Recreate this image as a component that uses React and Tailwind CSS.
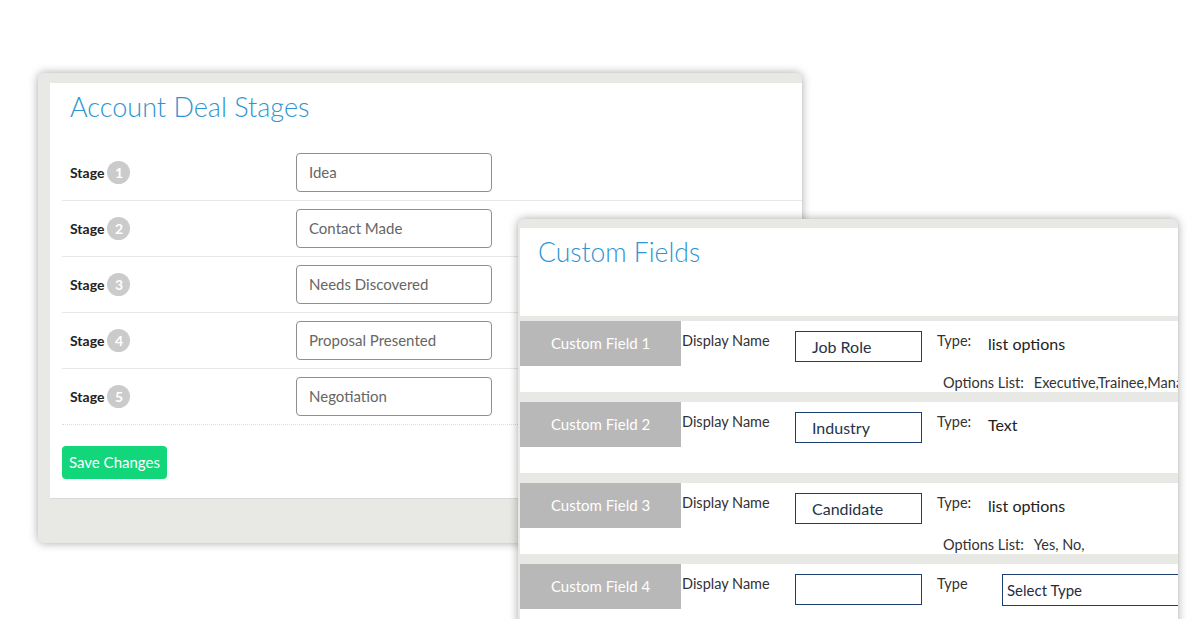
const STAGES = ['Idea', 'Contact Made', 'Needs Discovered', 'Proposal Presented', 'Negotiation']

const FIELDS = [
  { n: 1, name: 'Job Role', type: 'list options', options: 'Executive,Trainee,Manager,Director' },
  { n: 2, name: 'Industry', type: 'Text' },
  { n: 3, name: 'Candidate', type: 'list options', options: 'Yes, No,' },
  { n: 4, name: '', type: null },
]

function StageRow({ n, value, last }) {
  return (
    <div className={`flex items-center h-[56px] ${last ? 'border-b border-dotted border-[#dcdcdc]' : 'border-b border-[#e6e6e6]'}`}>
      <div className="w-[234px] pl-2 flex items-center gap-[3px]">
        <span className="text-[14px] font-bold text-[#222]">Stage</span>
        <span className="w-[23px] h-[23px] rounded-full bg-[#cbcbcb] text-white text-[14px] font-bold flex items-center justify-center">
          {n}
        </span>
      </div>
      <div className="w-[196px] h-[39px] border border-[#8f8f8f] rounded-[4px] flex items-center pl-3 text-[15px] text-[#666]">
        {value}
      </div>
    </div>
  )
}

function FieldRow({ f, first }) {
  return (
    <div>
      <div className={`bg-[#e8e8e4] ${first ? 'h-[5px]' : 'h-[10px]'}`} />
      <div className="relative h-[71px] flex items-start">
        <div className="w-[161px] h-[45px] bg-[#b8b8b8] text-white text-[15px] flex items-center justify-center shrink-0">
          Custom Field {f.n}
        </div>
        <div className="w-[114px] pl-px pt-[9px] text-[14.5px] text-[#333] shrink-0">Display Name</div>
        <div className="mt-[10px] w-[127px] h-[31px] border border-[#1b3f6e] pl-4 flex items-center text-[16px] text-[#24324a] shrink-0">
          {f.name}
        </div>
        <div className="pl-[15px] pt-[9px] text-[14.5px] text-[#333] w-[66px] shrink-0">{f.type ? 'Type:' : 'Type'}</div>
        {f.type ? (
          <div className="pt-[11px] text-[16px] text-[#222] whitespace-nowrap">{f.type}</div>
        ) : (
          <div className="mt-[10px] ml-[14px] w-[200px] h-[32px] border border-[#1b3f6e] pl-1 flex items-center text-[15px] text-[#1f2d44] shrink-0">
            Select Type
          </div>
        )}
        {f.options && (
          <div className="absolute left-[423px] top-[51px] text-[14.5px] text-[#333] whitespace-nowrap">
            Options List:<span className="ml-[10px]">{f.options}</span>
          </div>
        )}
      </div>
    </div>
  )
}

export default function App() {
  return (
    <div className="relative w-[1200px] h-[619px] overflow-hidden bg-white font-['Lato',sans-serif]">
      {/* Account Deal Stages */}
      <div className="pt-[73px] pl-[38px]">
        <div className="w-[764px] h-[470px] rounded-t-md rounded-bl-md bg-[#e8e8e4] shadow-[0_0_10px_rgba(0,0,0,0.35)] pl-3 pt-[10px]">
          <div className="h-[416px] bg-white border-b border-[#d9d9d9] pl-3">
            <h1 className="h-[62px] pl-2 pt-[7px] text-[27px] font-light text-[#2e95d3] leading-[34px]">
              Account Deal Stages
            </h1>
            {STAGES.map((s, i) => (
              <StageRow key={s} n={i + 1} value={s} last={i === STAGES.length - 1} />
            ))}
            <button className="mt-[21px] h-[33px] px-[7px] rounded-[4px] bg-[#11d67a] text-white text-[15px]">
              Save Changes
            </button>
          </div>
        </div>
      </div>

      {/* Custom Fields */}
      <div className="absolute left-[518px] top-[219px] w-[660px] h-[420px] rounded-t-md bg-[#e8e8e4] shadow-[0_0_10px_rgba(0,0,0,0.35)] pt-[9px] pl-[2px]">
        <div className="h-full bg-white overflow-hidden">
          <h2 className="h-[88px] pl-[18px] pt-[7px] text-[26.5px] font-light text-[#2e95d3] leading-[34px]">
            Custom Fields
          </h2>
          {FIELDS.map((f, i) => (
            <FieldRow key={f.n} f={f} first={i === 0} />
          ))}
        </div>
      </div>
    </div>
  )
}
